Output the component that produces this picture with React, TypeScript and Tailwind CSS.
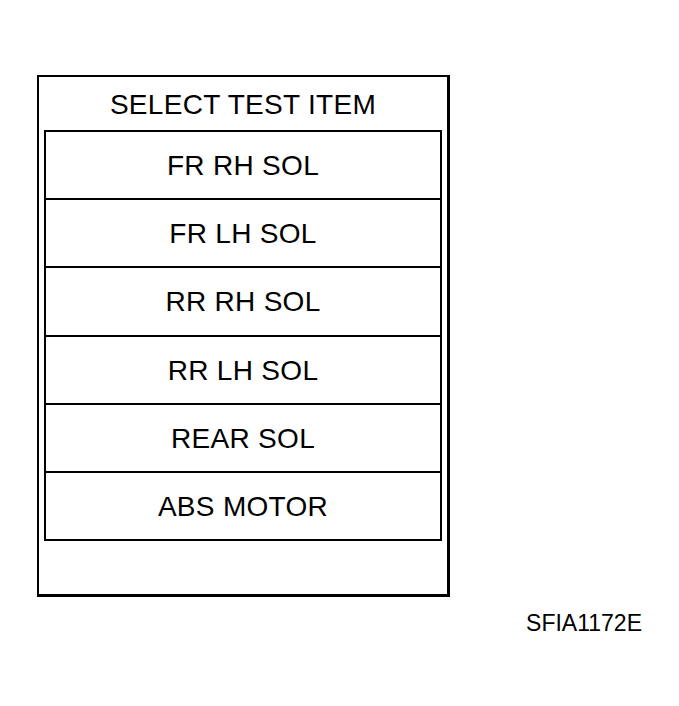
const items = ["FR RH SOL", "FR LH SOL", "RR RH SOL", "RR LH SOL", "REAR SOL", "ABS MOTOR"];

export default function App() {
  return (
    <div
      className="min-h-[706px] w-[679px] bg-white text-black"
      style={{ fontFamily: '"Liberation Sans", Arial, sans-serif' }}
    >
      <div className="w-[642px] pl-[37px] pt-[75px]">
        {/* screen frame */}
        <div className="flex w-[413px] flex-col border-t-2 border-l-2 border-r-[3px] border-b-[3px] border-black">
          <div className="flex h-[53px] items-center justify-center pt-[2px] text-[28px] leading-none tracking-[0.3px]">
            SELECT TEST ITEM
          </div>
          <div className="mx-[5px] flex h-[411px] flex-col border-2 border-black">
            {items.map((item, i) => (
              <div
                key={item}
                className={
                  i === 0
                    ? "flex flex-1 items-center justify-center pt-[2px] text-[28px] leading-none tracking-[0.3px]"
                    : "flex flex-1 items-center justify-center border-t-2 border-black pt-[2px] text-[28px] leading-none tracking-[0.3px]"
                }
              >
                {item}
              </div>
            ))}
          </div>
          <div className="h-[53px]" />
        </div>
        <div className="mt-[15px] text-right text-[23px] leading-none">SFIA1172E</div>
      </div>
    </div>
  );
}
